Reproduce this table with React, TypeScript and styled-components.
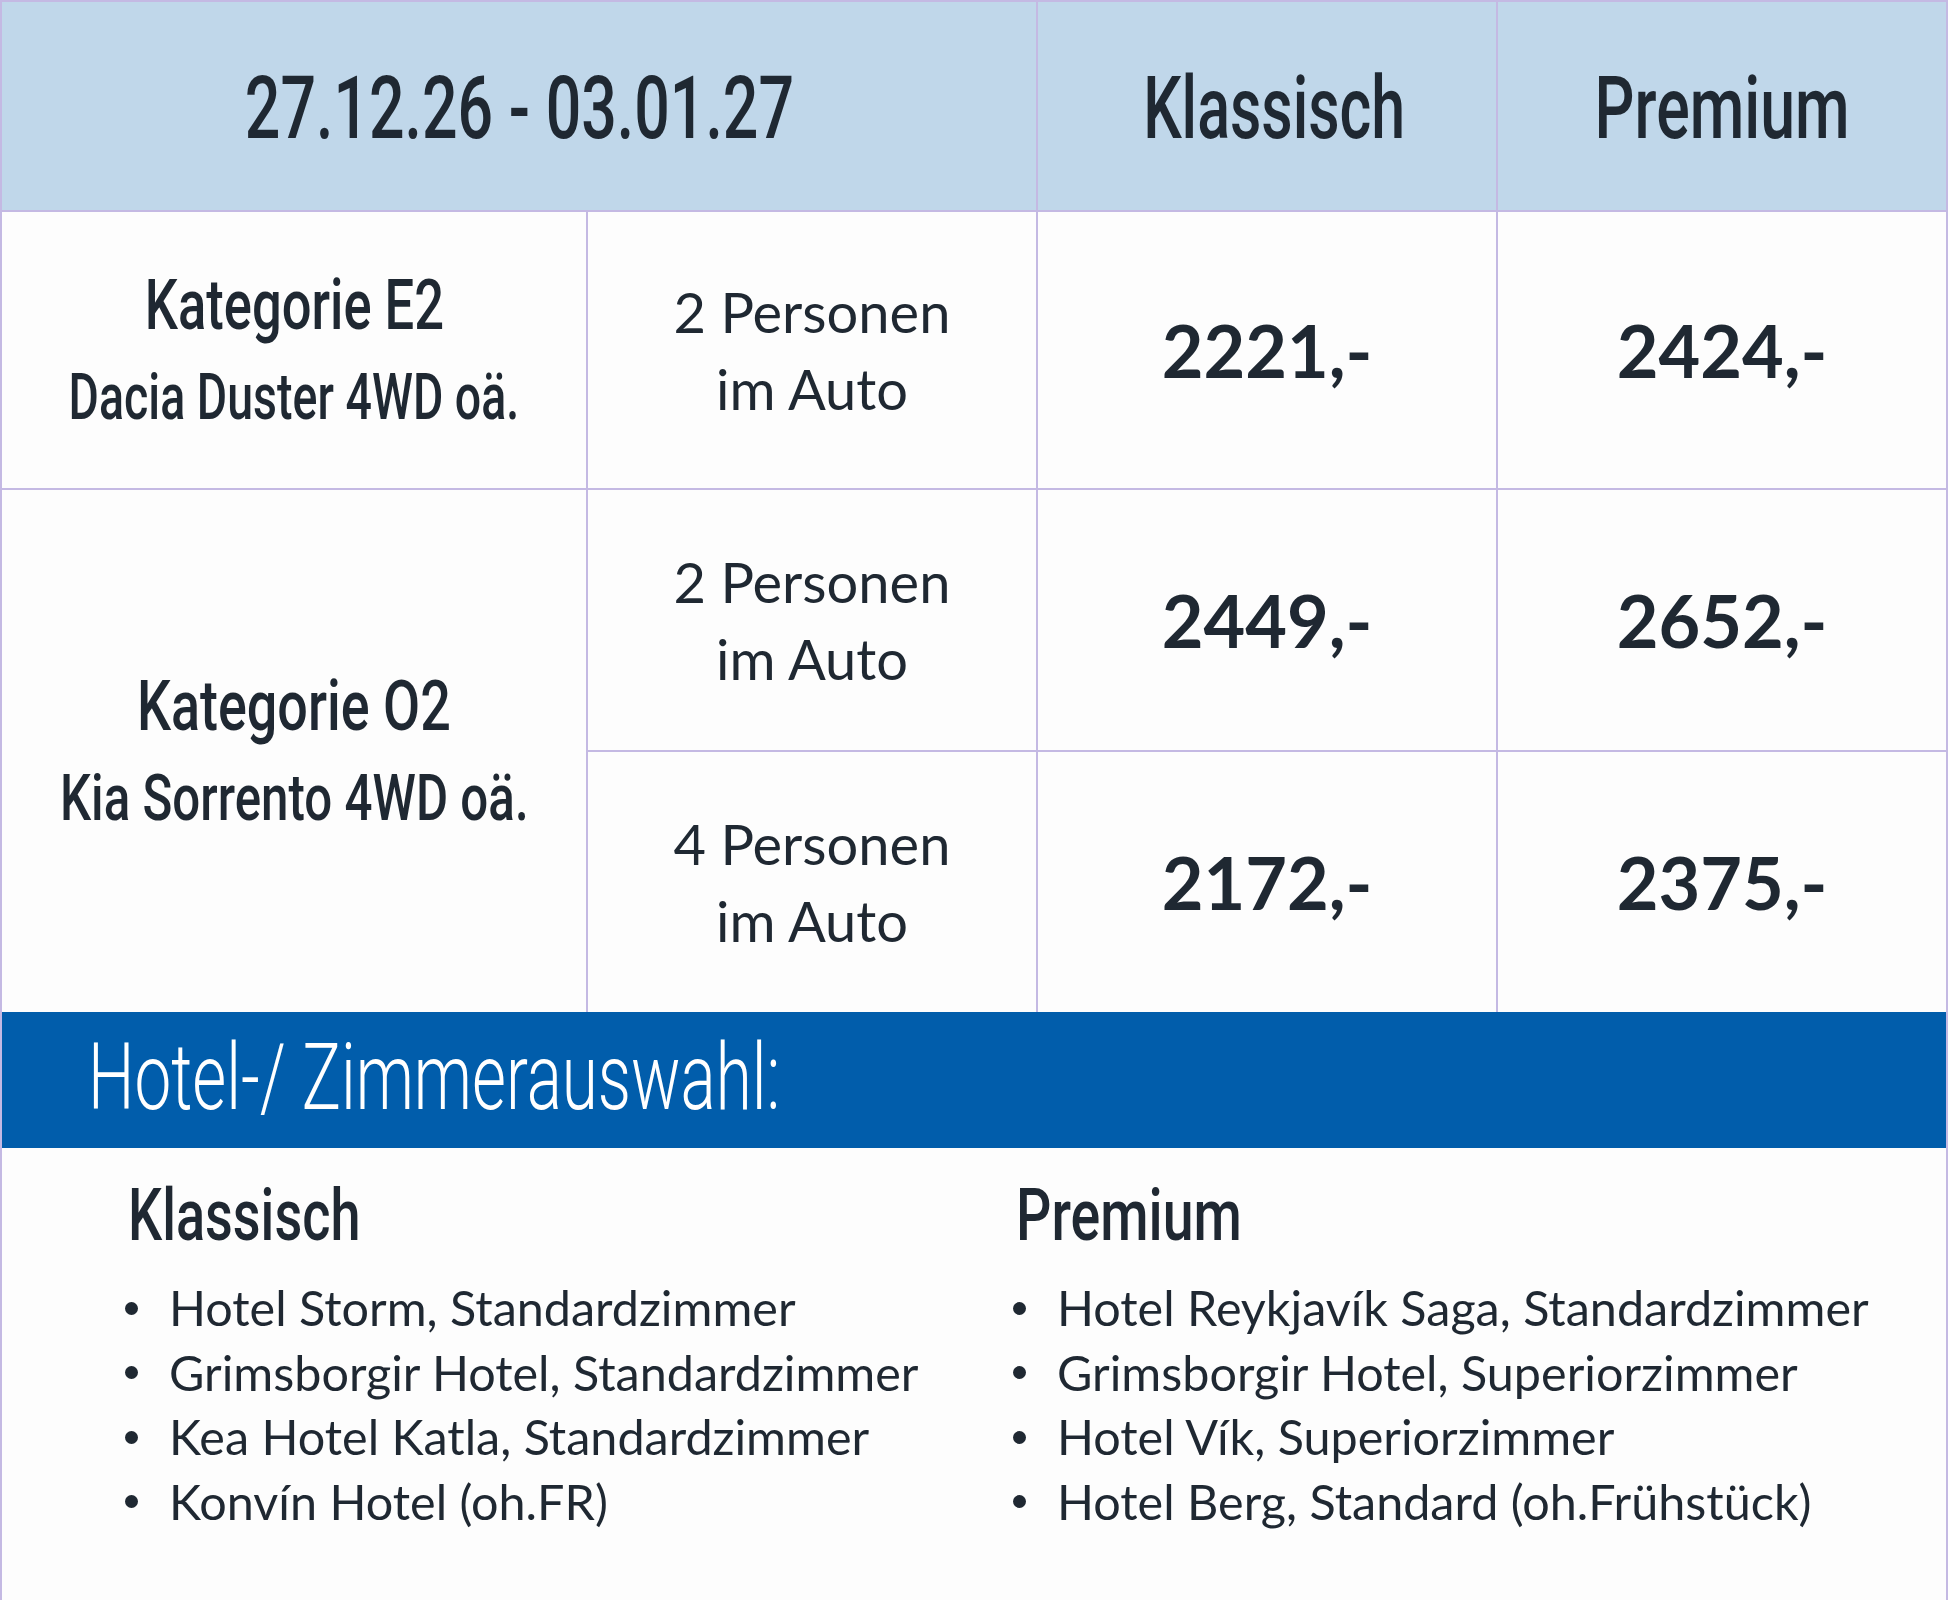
import React from "react";
import styled, { createGlobalStyle } from "styled-components";

const LINE = "#c4b9e3";
const INK = "#1f2832";

const GlobalStyle = createGlobalStyle`
  html, body {
    margin: 0;
    padding: 0;
    background: #fdfdfd;
  }
  body {
    color: ${INK};
    font-family: Lato, "Open Sans", sans-serif;
  }
`;

const Sheet = styled.div`
  width: 1948px;
  height: 1600px;
  box-sizing: border-box;
  border-left: 2px solid ${LINE};
  border-right: 2px solid ${LINE};
  background: #fdfdfd;
  display: flex;
  flex-direction: column;
`;

const Table = styled.div`
  display: grid;
  grid-template-columns: 584px 448px 458px 448px;
  grid-template-rows: 208px 276px 260px 260px;
  gap: 2px;
  padding-top: 2px;
  background: ${LINE};
`;

const Cell = styled.div<{ $head?: boolean; $span?: number; $rows?: number; $nudge?: number }>`
  background: ${(p) => (p.$head ? "#c0d7ea" : "#fdfdfd")};
  grid-column: span ${(p) => p.$span ?? 1};
  grid-row: span ${(p) => p.$rows ?? 1};
  display: flex;
  flex-direction: column;
  align-items: center;
  justify-content: center;
  text-align: center;
  padding-top: ${(p) => (p.$head ? 4 : 0)}px;
  padding-left: ${(p) => p.$nudge ?? 0}px;
  box-sizing: border-box;
`;

// condensed display face, narrowed from Roboto
const Squeeze = styled.span<{ $x?: number; $origin?: string }>`
  display: inline-block;
  white-space: nowrap;
  transform: scaleX(${(p) => p.$x ?? 0.72});
  transform-origin: ${(p) => p.$origin ?? "center"};
`;

const HeadText = styled.div`
  font-family: Roboto, "Liberation Sans", sans-serif;
  font-weight: 500;
  font-size: 87px;
  line-height: 1;
`;

const CatTitle = styled.div`
  font-family: Roboto, "Liberation Sans", sans-serif;
  font-weight: 500;
  font-size: 70px;
  line-height: 1;
`;

const CatCar = styled(CatTitle)`
  font-size: 64px;
  margin-top: 26px;
`;

const Persons = styled.div`
  font-size: 56px;
  line-height: 77px;
  font-weight: 400;
`;

const Price = styled.div`
  font-size: 72px;
  line-height: 1;
  font-weight: 700;
`;

const Band = styled.div`
  height: 136px;
  background: #015dab;
  color: #ffffff;
  padding: 19px 0 0 86px;
  box-sizing: border-box;
  font-family: Roboto, "Liberation Sans", sans-serif;
  font-weight: 300;
  font-size: 93px;
  line-height: 1;
`;

const Hotels = styled.section`
  display: grid;
  grid-template-columns: 888px 888px;
  padding: 27px 0 0 124px;
`;

const ListTitle = styled.h2`
  margin: 0 0 20px 2px;
  font-family: Roboto, "Liberation Sans", sans-serif;
  font-weight: 500;
  font-size: 73px;
  line-height: 80px;
`;

const List = styled.ul`
  margin: 0;
  padding: 0;
  list-style: none;
`;

const Item = styled.li`
  display: flex;
  align-items: center;
  font-size: 48.5px;
  line-height: 64.5px;
  white-space: nowrap;
`;

const Dot = styled.span`
  flex: 0 0 13px;
  height: 13px;
  border-radius: 50%;
  background: ${INK};
  margin: 2px 31px 0 -1px;
`;

const rows = [
  { persons: "2", klassisch: "2449,-", premium: "2652,-" },
  { persons: "4", klassisch: "2172,-", premium: "2375,-" },
];

const klassisch = [
  "Hotel Storm, Standardzimmer",
  "Grimsborgir Hotel, Standardzimmer",
  "Kea Hotel Katla, Standardzimmer",
  "Konvín Hotel (oh.FR)",
];

const premium = [
  "Hotel Reykjavík Saga, Standardzimmer",
  "Grimsborgir Hotel, Superiorzimmer",
  "Hotel Vík, Superiorzimmer",
  "Hotel Berg, Standard (oh.Frühstück)",
];

const PersonsCell = ({ count }: { count: string }) => (
  <Cell>
    <Persons>
      {count} Personen
      <br />
      im Auto
    </Persons>
  </Cell>
);

const HotelColumn = ({
  title,
  items,
  squeeze,
}: {
  title: string;
  items: string[];
  squeeze: number;
}) => (
  <div>
    <ListTitle>
      <Squeeze $x={squeeze} $origin="left">
        {title}
      </Squeeze>
    </ListTitle>
    <List>
      {items.map((item) => (
        <Item key={item}>
          <Dot />
          {item}
        </Item>
      ))}
    </List>
  </div>
);

export default function App() {
  return (
    <>
      <GlobalStyle />
      <Sheet>
        <Table>
          <Cell $head $span={2}>
            <HeadText>
              <Squeeze>27.12.26 - 03.01.27</Squeeze>
            </HeadText>
          </Cell>
          <Cell $head $nudge={14}>
            <HeadText>
              <Squeeze $x={0.7}>Klassisch</Squeeze>
            </HeadText>
          </Cell>
          <Cell $head>
            <HeadText>
              <Squeeze>Premium</Squeeze>
            </HeadText>
          </Cell>

          <Cell>
            <CatTitle>
              <Squeeze $x={0.75}>Kategorie E2</Squeeze>
            </CatTitle>
            <CatCar>
              <Squeeze $x={0.727}>Dacia Duster 4WD oä.</Squeeze>
            </CatCar>
          </Cell>
          <PersonsCell count="2" />
          <Cell>
            <Price>2221,-</Price>
          </Cell>
          <Cell>
            <Price>2424,-</Price>
          </Cell>

          <Cell $rows={2}>
            <CatTitle>
              <Squeeze $x={0.77}>Kategorie O2</Squeeze>
            </CatTitle>
            <CatCar>
              <Squeeze $x={0.77}>Kia Sorrento 4WD oä.</Squeeze>
            </CatCar>
          </Cell>
          {rows.map((r) => (
            <React.Fragment key={r.persons}>
              <PersonsCell count={r.persons} />
              <Cell>
                <Price>{r.klassisch}</Price>
              </Cell>
              <Cell>
                <Price>{r.premium}</Price>
              </Cell>
            </React.Fragment>
          ))}
        </Table>

        <Band>
          <Squeeze $x={0.705} $origin="left">
            Hotel-/ Zimmerauswahl:
          </Squeeze>
        </Band>

        <Hotels>
          <HotelColumn title="Klassisch" items={klassisch} squeeze={0.74} />
          <HotelColumn title="Premium" items={premium} squeeze={0.76} />
        </Hotels>
      </Sheet>
    </>
  );
}
